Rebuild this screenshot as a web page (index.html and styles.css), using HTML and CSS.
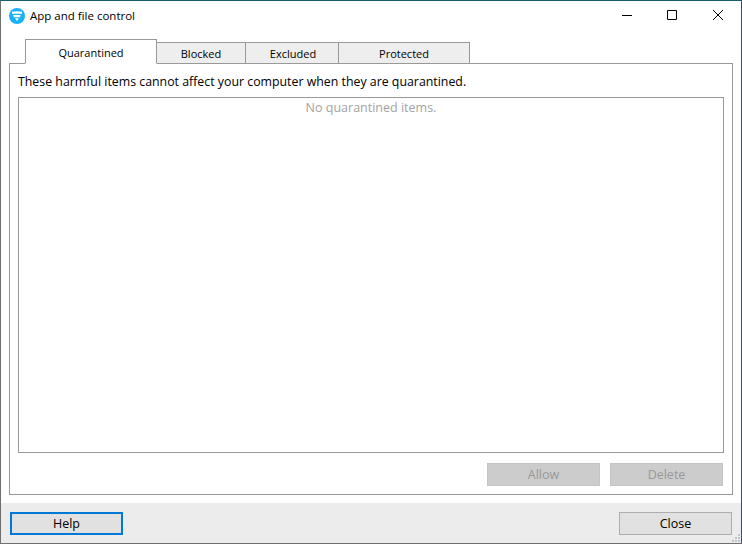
FILE: index.html
```html
<!DOCTYPE html>
<html lang="en">
<head>
<meta charset="utf-8">
<title>App and file control</title>
<link rel="stylesheet" href="styles.css">
</head>
<body>
<div class="window">
  <header class="titlebar">
    <svg class="logo" width="16" height="16" viewBox="0 0 16 16"><circle cx="8" cy="8" r="8" fill="#17b2f7"/><path d="M2.8 3.8C6 3 10 3 13.2 3.8L12.7 6.1C10 5.5 6 5.5 3.3 6.1ZM4 7.3C6 6.9 9 6.9 11.6 7.2L11 9.2H5ZM6 10.2H9.8L8 13Z" fill="#fff"/></svg>
    <span class="title">App and file control</span>
    <div class="controls">
      <svg width="10" height="10" viewBox="0 0 10 10"><path d="M0 5.5H10" stroke="#000" fill="none"/></svg>
      <svg class="ctl-max" width="10" height="10" viewBox="0 0 10 10"><path d="M.5.5H9.5V9.5H.5Z" stroke="#000" fill="none"/></svg>
      <svg width="10" height="10" viewBox="0 0 10 10"><path d="M0 0L10 10M10 0L0 10" stroke="#000" stroke-width="1" fill="none"/></svg>
    </div>
  </header>
  <main class="content">
    <nav class="tabs">
      <div class="tab active">Quarantined</div>
      <div class="tab t-blocked">Blocked</div>
      <div class="tab t-excluded">Excluded</div>
      <div class="tab t-protected">Protected</div>
    </nav>
    <section class="panel">
      <p class="intro">These harmful items cannot affect your computer when they are quarantined.</p>
      <div class="list">No quarantined items.</div>
      <div class="actions">
        <button class="btn disabled">Allow</button>
        <button class="btn disabled">Delete</button>
      </div>
    </section>
  </main>
  <footer class="footer">
    <button class="btn normal focused">Help</button>
    <button class="btn normal">Close</button>
    <svg class="grip" width="8" height="8" viewBox="0 0 8 8"><path d="M6 0h2v2H6ZM3 3h2v2H3ZM6 3h2v2H6ZM0 6h2v2H0ZM3 6h2v2H3ZM6 6h2v2H6Z" fill="#c4c4c4"/></svg>
  </footer>
</div>
</body>
</html>
```
FILE: styles.css
```css
* { box-sizing: border-box; }
html, body { margin: 0; padding: 0; }
body { width: 742px; height: 544px; overflow: hidden; font-family: "Open Sans", "Noto Sans", sans-serif; color: #000; background: #fff; }
.window { position: relative; width: 742px; height: 544px; display: flex; flex-direction: column; background: #fff; border: 1px solid #6f6f6f; border-top-color: #1b5c70; border-right-color: #1b5c70; }
.titlebar { height: 30px; flex: none; display: flex; align-items: center; padding-left: 8px; }
.logo { flex: none; margin-top: -1px; }
.title { margin-left: 5px; font-size: 11.5px; margin-top: -2px; }
.controls { margin-left: auto; display: flex; gap: 35px; margin-right: 18px; margin-top: -2px; }
.ctl-max { margin-right: 1px; }
.content { flex: 1; display: flex; flex-direction: column; padding: 8px 8px 8px; min-height: 0; }
.tabs { display: flex; align-items: flex-end; height: 25px; padding-left: 16px; margin-bottom: -1px; position: relative; z-index: 1; flex: none; }
.tab { height: 22px; background: #eeeeee; border: 1px solid #999; border-left: none; font-size: 11px; display: flex; align-items: center; justify-content: center; }
.tab.active { width: 132px; height: 25px; background: #fff; border: 1px solid #999; border-bottom: 1px solid #fff; padding-top: 2px; }
.t-blocked { width: 89px; }
.t-excluded { width: 93px; padding-left: 2px; }
.t-protected { width: 131px; }
.panel { flex: 1; min-height: 0; border: 1px solid #999; display: flex; flex-direction: column; padding: 0 8px 8px 8px; width: 724px; }
.intro { margin: 0; height: 33px; font-size: 12.35px; display: flex; align-items: center; padding-top: 2px; }
.list { flex: 1; border: 1px solid #999; color: #a3a3a3; font-size: 12.5px; text-align: center; padding-top: 1px; }
.actions { display: flex; justify-content: flex-end; gap: 10px; padding-top: 10px; padding-right: 1px; }
.btn { width: 113px; height: 23px; padding: 0; font: inherit; font-size: 12.5px; }
.btn.disabled { background: #cccccc; border: 1px solid #c4c4c4; color: #999; }
.footer { position: relative; height: 40px; flex: none; background: #ececec; display: flex; justify-content: space-between; align-items: center; padding: 0 9px; }
.btn.normal { background: #e1e1e1; border: 1px solid #adadad; color: #000; }
.btn.focused { border: 2px solid #0078d7; }
.grip { position: absolute; right: 1px; bottom: 1px; }
```
